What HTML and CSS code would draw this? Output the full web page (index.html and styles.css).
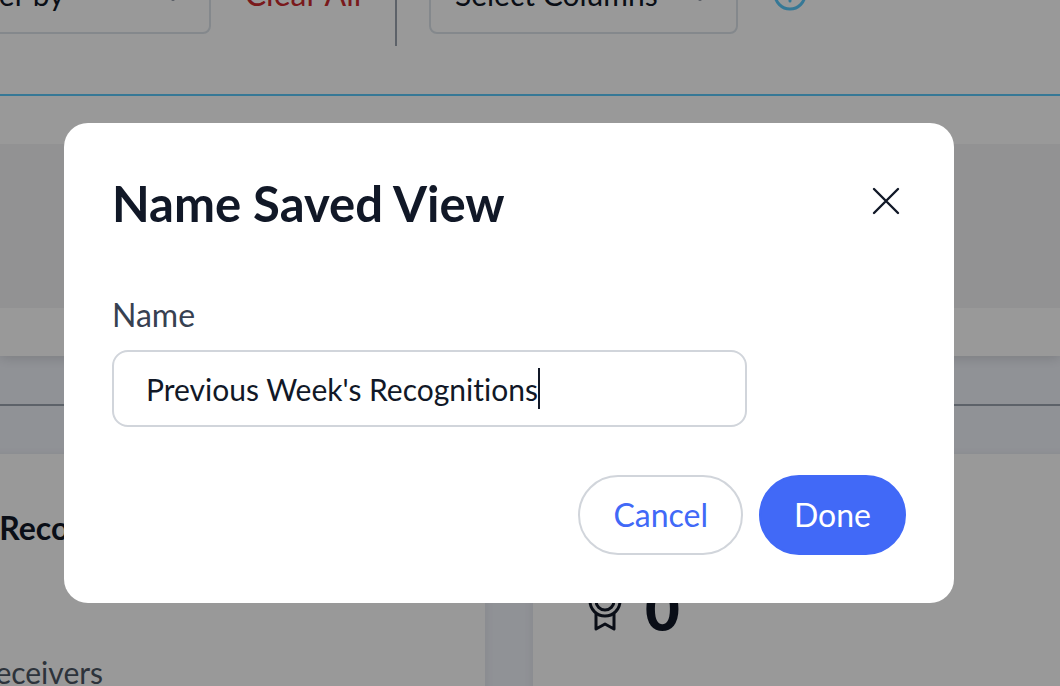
FILE: index.html
```
<!DOCTYPE html>
<html lang="en">
<head>
  <meta charset="UTF-8">
  <meta name="viewport" content="width=device-width, initial-scale=1.0">
  <title>Name Saved View</title>
  <link rel="stylesheet" href="styles.css">
</head>
<body>

  <!-- Page behind the dialog -->
  <main class="page">
    <section class="panel">
      <div class="toolbar">
        <div class="select-wrap filter">
          <select aria-label="Filter by">
            <option>Filter by</option>
          </select>
          <svg class="chevron" viewBox="0 0 20 12"><path d="M4 3l6 6 6-6"/></svg>
        </div>
        <button type="button" class="clear-btn">Clear All</button>
        <div class="divider"></div>
        <div class="select-wrap columns">
          <select aria-label="Select Columns">
            <option>Select Columns</option>
          </select>
          <svg class="chevron" viewBox="0 0 20 12"><path d="M4 3l6 6 6-6"/></svg>
        </div>
        <button type="button" class="help-btn" aria-label="Help">
          <svg viewBox="0 1 40 40">
            <circle cx="20" cy="19" r="15"/>
            <circle class="dot" cx="20" cy="13" r="2"/>
            <path d="M20 19v7"/>
          </svg>
        </button>
      </div>
      <div class="band"></div>
    </section>

    <hr class="line">

    <section class="cards">
      <div class="card">
        <h2>Total Recognitions</h2>
        <p class="note">Top Receivers</p>
      </div>
      <div class="card">
        <h2>Recognitions</h2>
        <div class="stat">
          <svg viewBox="0 0 48 48">
            <circle cx="24" cy="17" r="15"/>
            <circle cx="24" cy="17" r="9"/>
            <path d="M15 30v15l9-5 9 5V30"/>
          </svg>
          <span>0</span>
        </div>
      </div>
    </section>
  </main>

  <!-- Dialog -->
  <div class="overlay">
    <form class="modal" role="dialog" aria-labelledby="modal-title">
      <div class="modal-header">
        <h1 id="modal-title">Name Saved View</h1>
        <button type="button" class="close-btn" aria-label="Close">
          <svg viewBox="0 0 40 40"><path d="M8 8l24 24M32 8L8 32"/></svg>
        </button>
      </div>
      <label for="view-name">Name</label>
      <div class="field">
        <input type="text" id="view-name" name="view-name" value="Previous Week's Recognitions">
        <span class="caret"></span>
      </div>
      <div class="actions">
        <button type="button" class="btn cancel-btn">Cancel</button>
        <button type="submit" class="btn done-btn">Done</button>
      </div>
    </form>
  </div>

</body>
</html>
```
FILE: styles.css
```
* {
  box-sizing: border-box;
}

body {
  margin: 0;
  height: 100vh;
  overflow: hidden;
  background: #f1f4fb;
  color: #111827;
  font-family: Lato, "Liberation Sans", sans-serif;
  font-size: 30px;
  font-variant-ligatures: none;
  line-height: 40px;
}

button,
input,
select {
  font: inherit;
  font-variant-ligatures: none;
  color: inherit;
  background: none;
  border: none;
  padding: 0;
}

button {
  cursor: pointer;
}

svg {
  display: block;
  fill: none;
  stroke: currentColor;
  stroke-width: 2;
  stroke-linecap: round;
  stroke-linejoin: round;
}

/* Page, scrolled part of the way down */
.page {
  margin-top: -55px;
}

.panel {
  background: #fff;
  padding-bottom: 48px;
  box-shadow: 0 2px 12px rgba(0, 0, 0, 0.15);
}

.toolbar {
  display: flex;
  align-items: center;
  gap: 32px;
  margin-left: -69px;
  padding-bottom: 48px;
  border-bottom: 2px solid #5ac8fa;
}

.select-wrap {
  display: grid;
  align-items: center;
  height: 77px;
  border: 2px solid #dce3ea;
  border-radius: 8px;
}

.select-wrap select,
.select-wrap .chevron {
  grid-area: 1 / 1;
}

.select-wrap select {
  appearance: none;
  width: 100%;
  height: 100%;
  padding: 0 24px 4px;
}

.filter {
  width: 280px;
}

.columns {
  width: 309px;
}

.chevron {
  width: 20px;
  justify-self: end;
  margin-right: 26px;
  color: #9ca3af;
  stroke-width: 4;
  pointer-events: none;
}

.clear-btn {
  min-width: 120px;
  padding-bottom: 4px;
  color: #cb2b2f;
  font-size: 32px;
}

.divider {
  width: 2px;
  height: 101px;
  background: #9ca3af;
}

.help-btn svg {
  width: 40px;
  color: #5ac8fa;
  stroke-width: 3;
}

.help-btn .dot {
  fill: currentColor;
  stroke: none;
}

.band {
  height: 164px;
  margin-top: 48px;
  background: #f3f3f5;
}

.line {
  height: 2px;
  margin: 48px 0;
  border: none;
  background: #9ca3af;
}

.cards {
  display: grid;
  grid-template-columns: 1fr 1fr;
  gap: 48px;
  margin: 0 -84px 0 -126px;
}

.card {
  min-height: 320px;
  padding: 54px 48px;
  background: #fff;
  box-shadow: 0 2px 12px rgba(0, 0, 0, 0.08);
}

.card h2 {
  margin: 0;
  font-size: 32px;
  font-weight: 700;
}

.note {
  margin: 104px 0 0;
  color: #4b5563;
}

.stat {
  display: flex;
  align-items: center;
  gap: 16px;
  margin-top: 24px;
  font-size: 60px;
  font-weight: 900;
  line-height: 72px;
}

.stat svg {
  width: 48px;
  stroke-width: 3;
}

/* Dialog */
.overlay {
  position: fixed;
  inset: 0;
  padding: 123px 106px 0 64px;
  background: rgba(0, 0, 0, 0.4);
}

.modal {
  padding: 48px;
  background: #fff;
  border-radius: 24px;
}

.modal-header {
  display: flex;
  justify-content: space-between;
  align-items: flex-start;
  margin-bottom: 60px;
}

.modal-header h1 {
  margin: 0;
  font-size: 49px;
  font-weight: 700;
  line-height: 64px;
}

.close-btn {
  height: 60px;
}

.close-btn svg {
  width: 40px;
  stroke-width: 2.4;
}

.modal label {
  display: block;
  margin-bottom: 15px;
  color: #374151;
  font-size: 32px;
}

.field {
  display: flex;
  align-items: center;
  width: 80%;
  height: 77px;
  padding: 0 32px;
  border: 2px solid #d1d5db;
  border-radius: 16px;
}

.field input {
  field-sizing: content;
  height: 100%;
  outline: none;
}

.caret {
  width: 2px;
  height: 41px;
  background: #111827;
}

.actions {
  display: flex;
  justify-content: flex-end;
  gap: 16px;
  margin-top: 48px;
}

.btn {
  height: 80px;
  padding: 0 33px;
  border: 2px solid #4169f7;
  border-radius: 40px;
  font-size: 32px;
}

.cancel-btn {
  border-color: #d1d5db;
  color: #4169f7;
}

.done-btn {
  background: #4169f7;
  color: #fff;
}
```
